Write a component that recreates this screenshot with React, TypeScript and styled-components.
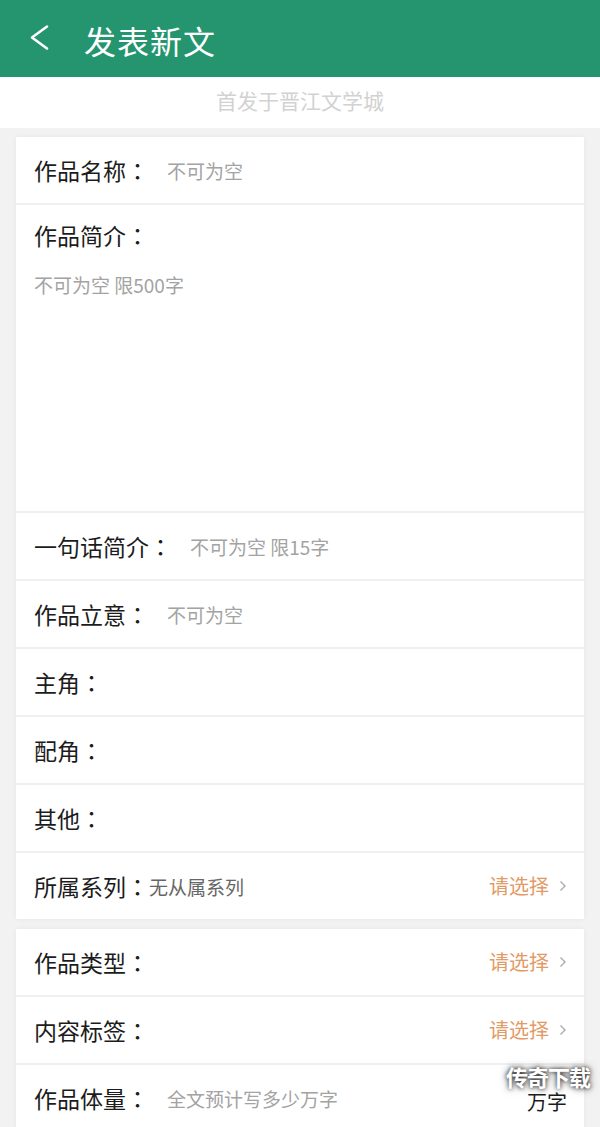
import React from "react";
import styled, { createGlobalStyle } from "styled-components";

const Global = createGlobalStyle`
  html, body { margin: 0; padding: 0; background: #f2f2f2; }
  body { font-family: "Noto Sans CJK SC", "Noto Sans", sans-serif; }
  * { box-sizing: border-box; }
`;

const Page = styled.div`
  position: relative;
  width: 600px;
  height: 1127px;
  overflow: hidden;
  background: #f2f2f2;
  display: flex;
  flex-direction: column;
`;

const Header = styled.header`
  height: 77px;
  flex: none;
  background: #24956f;
  display: flex;
  align-items: center;
  padding-left: 28px;
`;

const BackBtn = styled.div`
  width: 26px;
  height: 30px;
  display: flex;
  align-items: center;
  margin-right: 30px;
  margin-top: -2px;
`;

const Title = styled.h1`
  margin: 0;
  color: #ffffff;
  font-size: 32px;
  font-weight: 400;
  letter-spacing: 1px;
  line-height: 1;
  margin-top: 2px;
`;

const Sub = styled.div`
  height: 51px;
  flex: none;
  background: #ffffff;
  color: #d2d2d2;
  font-size: 21px;
  display: flex;
  align-items: center;
  justify-content: center;
  padding-bottom: 5px;
`;

const Body = styled.main`
  flex: 1;
  display: flex;
  flex-direction: column;
  gap: 10px;
  padding: 9px 16px 0 16px;
`;

const Card = styled.section`
  background: #ffffff;
  display: flex;
  flex-direction: column;
  box-shadow: 0 0 6px rgba(0, 0, 0, 0.05);
`;

const Row = styled.div<{ $tall?: boolean }>`
  display: flex;
  flex-direction: ${(p) => (p.$tall ? "column" : "row")};
  align-items: ${(p) => (p.$tall ? "flex-start" : "center")};
  height: ${(p) => (p.$tall ? "308px" : "68px")};
  padding: ${(p) => (p.$tall ? "19px 17px 0 18px" : "0 17px 0 18px")};
  border-bottom: 2px solid #f0f0f0;
  &:last-child {
    border-bottom: none;
    height: ${(p) => (p.$tall ? "306px" : "66px")};
  }
`;

const Label = styled.span`
  color: #1c1c1c;
  font-size: 23px;
  line-height: 1;
  white-space: nowrap;
  flex: none;
`;

const Colon = styled.span`
  font-family: "Noto Sans CJK TC", "Noto Sans CJK SC", sans-serif;
`;

const Placeholder = styled.span<{ $tight?: boolean; $dark?: boolean }>`
  color: ${(p) => (p.$dark ? "#666666" : "#a3a3a3")};
  font-size: 19px;
  line-height: 1;
  margin-left: ${(p) => (p.$tight ? "0" : "18px")};
  white-space: nowrap;
`;

const AreaPlaceholder = styled.span`
  color: #a3a3a3;
  font-size: 19px;
  line-height: 1;
  margin-top: 28px;
`;

const Spacer = styled.div`
  flex: 1;
`;

const Choose = styled.span`
  display: flex;
  align-items: center;
  gap: 10px;
  color: #e29a66;
  font-size: 20px;
  line-height: 1;
`;

const Unit = styled.span`
  color: #1c1c1c;
  font-size: 20px;
  line-height: 1;
  margin-top: 8px;
`;

const Watermark = styled.div`
  position: absolute;
  right: 10px;
  top: 1064px;
  color: #ffffff;
  font-size: 22px;
  font-weight: 700;
  line-height: 1.1;
  letter-spacing: -1px;
  text-shadow: 0 0 4px rgba(0, 0, 0, 0.85), 0 0 8px rgba(0, 0, 0, 0.5);
`;

const Chevron = () => (
  <svg width="8" height="12" viewBox="0 0 8 12">
    <polyline points="1.5,1.5 6,6 1.5,10.5" fill="none" stroke="#a8a8a8" strokeWidth="1.3" />
  </svg>
);

const Picker = () => (
  <Choose>
    请选择
    <Chevron />
  </Choose>
);

const FieldLabel = ({ text }: { text: string }) => (
  <Label>
    {text}
    <Colon>：</Colon>
  </Label>
);

export default function App() {
  return (
    <>
      <Global />
      <Page>
        <Header>
          <BackBtn>
            <svg width="22" height="28" viewBox="0 0 22 28">
              <polyline points="19,2.5 4,13.5 19,24.5" fill="none" stroke="#ffffff" strokeWidth="2.6" strokeLinecap="round" strokeLinejoin="round" />
            </svg>
          </BackBtn>
          <Title>发表新文</Title>
        </Header>
        <Sub>首发于晋江文学城</Sub>
        <Body>
          <Card>
            <Row>
              <FieldLabel text="作品名称" />
              <Placeholder>不可为空</Placeholder>
            </Row>
            <Row $tall>
              <FieldLabel text="作品简介" />
              <AreaPlaceholder>不可为空 限500字</AreaPlaceholder>
            </Row>
            <Row>
              <FieldLabel text="一句话简介" />
              <Placeholder>不可为空 限15字</Placeholder>
            </Row>
            <Row>
              <FieldLabel text="作品立意" />
              <Placeholder>不可为空</Placeholder>
            </Row>
            <Row>
              <FieldLabel text="主角" />
            </Row>
            <Row>
              <FieldLabel text="配角" />
            </Row>
            <Row>
              <FieldLabel text="其他" />
            </Row>
            <Row>
              <FieldLabel text="所属系列" />
              <Placeholder $tight $dark>无从属系列</Placeholder>
              <Spacer />
              <Picker />
            </Row>
          </Card>
          <Card>
            <Row>
              <FieldLabel text="作品类型" />
              <Spacer />
              <Picker />
            </Row>
            <Row>
              <FieldLabel text="内容标签" />
              <Spacer />
              <Picker />
            </Row>
            <Row>
              <FieldLabel text="作品体量" />
              <Placeholder>全文预计写多少万字</Placeholder>
              <Spacer />
              <Unit>万字</Unit>
            </Row>
          </Card>
        </Body>
        <Watermark>传奇下载</Watermark>
      </Page>
    </>
  );
}
